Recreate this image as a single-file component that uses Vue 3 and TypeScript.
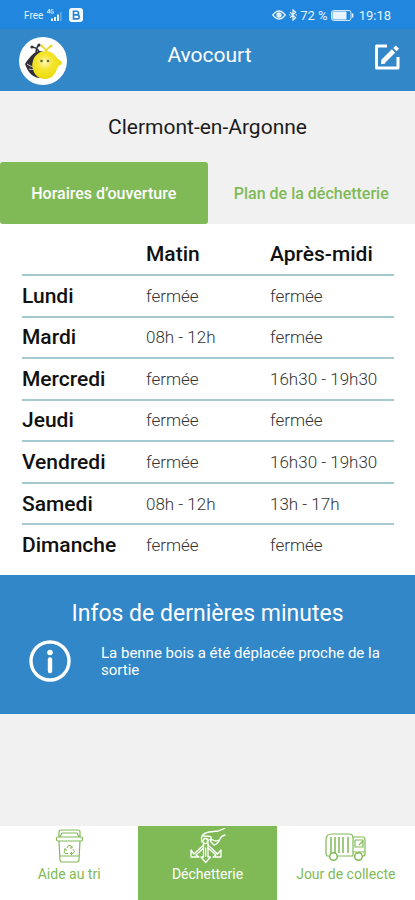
<script setup lang="ts">
import { ref } from 'vue'

interface Day {
  name: string
  morning: string
  afternoon: string
}

const days: Day[] = [
  { name: 'Lundi', morning: 'fermée', afternoon: 'fermée' },
  { name: 'Mardi', morning: '08h - 12h', afternoon: 'fermée' },
  { name: 'Mercredi', morning: 'fermée', afternoon: '16h30 - 19h30' },
  { name: 'Jeudi', morning: 'fermée', afternoon: 'fermée' },
  { name: 'Vendredi', morning: 'fermée', afternoon: '16h30 - 19h30' },
  { name: 'Samedi', morning: '08h - 12h', afternoon: '13h - 17h' },
  { name: 'Dimanche', morning: 'fermée', afternoon: 'fermée' },
]

const tabs: string[] = ['Horaires d’ouverture', 'Plan de la déchetterie']
const activeTab = ref(0)
</script>

<template>
  <div class="app">
    <div class="status">
      <div class="status-side">
        <span class="carrier">Free</span>
        <svg class="signal" width="18" height="13" viewBox="0 0 18 13" fill="currentColor">
          <path d="M2.400 4.400V0L0 3.400h3M6.400.8H4v3.400h2.400V2.600H5.400" fill="none" stroke="currentColor" stroke-width=".8" />
          <path d="M4 9.500h2V12H4zM7 8h2v4H7zM10 5.500h2V12h-2z" />
          <path d="M13 3h1.600v9H13z" opacity=".35" />
        </svg>
        <svg width="14" height="14" viewBox="0 0 14 14">
          <rect width="14" height="14" rx="3" fill="#f2faff" />
          <path d="M4.500 3.200h3.200a1.800 1.800 0 0 1 0 3.700H4.500zM4.500 6.900h3.700a2 2 0 0 1 0 4H4.500z" fill="none" stroke="#2c83cb" stroke-width="1.600" />
        </svg>
      </div>
      <div class="status-side right">
        <svg width="14" height="10" viewBox="0 0 14 10" fill="none" stroke="currentColor" stroke-width="1.300">
          <path d="M.8 5Q7-3 13.200 5 7 13 .8 5z" />
          <circle cx="7" cy="5" r="2" fill="currentColor" />
        </svg>
        <svg width="8" height="12" viewBox="0 0 8 12" fill="none" stroke="currentColor" stroke-width="1.200">
          <path d="M1 3.200 6.600 8.800 4 11.200V.8l2.600 2.400L1 8.800M0 6h1.400M6.600 6H8" />
        </svg>
        <span>72 %</span>
        <svg class="battery" width="23" height="11" viewBox="0 0 23 11">
          <rect x=".6" y=".6" width="19.400" height="9.800" rx="2" fill="none" stroke="currentColor" stroke-width="1" />
          <rect x="1.500" y="1.500" width="14" height="8" rx="1" fill="currentColor" />
          <path d="M21.700 3.500v4" stroke="currentColor" stroke-width="1.400" />
        </svg>
        <span>19:18</span>
      </div>
    </div>

    <header class="header">
      <a class="logo" href="#" aria-label="Accueil">
        <svg width="48" height="50" viewBox="0 0 48 50">
          <defs>
            <radialGradient id="face" cx=".42" cy=".4" r=".6">
              <stop offset="0" stop-color="#fff8b6" />
              <stop offset=".45" stop-color="#f6e52f" />
              <stop offset="1" stop-color="#ecd90b" />
            </radialGradient>
          </defs>
          <circle cx="24" cy="25" r="24" fill="#fff" />
          <path d="M21 15c-5 0-9 4-15 13 3 8 7 13 14 14l4-3-7-11 8-12z" fill="#302f38" />
          <path d="M20 16q-1-4-7-5M17 16q1-6 3-7" fill="none" stroke="#302f38" stroke-width="1.600" />
          <circle cx="13" cy="11" r="1.600" fill="#302f38" />
          <circle cx="20" cy="9" r="1.600" fill="#302f38" />
          <path d="M8 28q3 2 6 3M10 33q3 1 5 0" fill="none" stroke="#f2f2f2" stroke-width=".8" />
          <path d="M27 17q0-4 5-7M28 17q-1-4-5-7" fill="none" stroke="#ead92a" stroke-width="1.700" />
          <circle cx="32" cy="10" r="1.500" fill="#ead92a" />
          <circle cx="23" cy="10" r="1.500" fill="#ead92a" />
          <path d="M27 15c6 0 9 4 11 7 2 2 5 3 5 5s-4 2-5 6c-2 6-6 10-12 10s-11-4-12-10c-1-3-1-5 0-8 1-5 6-10 13-10z" fill="url(#face)" />
          <circle cx="22.500" cy="25" r="1.300" fill="#6b6440" />
          <circle cx="29" cy="25" r="1.300" fill="#6b6440" />
        </svg>
      </a>
      <h1>Avocourt</h1>
      <button class="edit" type="button" aria-label="Modifier">
        <svg width="26" height="26" viewBox="0 0 26 26" fill="none" stroke="currentColor">
          <path d="M13 2H2.500V24H24V13" stroke-width="3" stroke-linejoin="round" />
          <path d="M9 17.500 19.500 7" stroke-width="4.600" />
          <path d="M20.800 5.700 23.400 3.100" stroke-width="4.600" />
          <path d="m7.500 15.500 4 4-4.500.7z" fill="currentColor" stroke="none" />
        </svg>
      </button>
    </header>

    <main>
      <h2 class="town">Clermont-en-Argonne</h2>

      <div class="tabs" role="tablist">
        <button
          v-for="(tab, index) in tabs"
          :key="tab"
          type="button"
          role="tab"
          class="tab"
          :class="{ active: index === activeTab }"
          :aria-selected="index === activeTab"
          @click="activeTab = index"
        >
          {{ tab }}
        </button>
      </div>

      <section class="hours">
        <table>
          <thead>
            <tr>
              <td></td>
              <th scope="col">Matin</th>
              <th scope="col">Après-midi</th>
            </tr>
          </thead>
          <tbody>
            <tr v-for="day in days" :key="day.name">
              <th scope="row">{{ day.name }}</th>
              <td>{{ day.morning }}</td>
              <td>{{ day.afternoon }}</td>
            </tr>
          </tbody>
        </table>
      </section>

      <section class="news">
        <h2>Infos de dernières minutes</h2>
        <div class="news-body">
          <svg width="42" height="42" viewBox="0 0 42 42" fill="none" stroke="currentColor">
            <circle cx="21" cy="21" r="19" stroke-width="3.400" />
            <circle cx="21" cy="12.500" r="2.800" fill="currentColor" stroke="none" />
            <path d="M21 19.500V31" stroke-width="4.400" stroke-linecap="round" />
          </svg>
          <p>La benne bois a été déplacée proche de la sortie</p>
        </div>
      </section>
    </main>

    <nav class="nav">
      <a href="#">
        <svg width="44" height="36" viewBox="0 0 44 36" fill="none" stroke="currentColor" stroke-width="1.200" stroke-linejoin="round">
          <path d="M12 9V4q0-2 2-2h17q2 0 2 2v5M13 9l2-4h15l2 4" />
          <rect x="9.500" y="9" width="26" height="4" rx="1.500" />
          <path d="m12 13 1 19q.2 2 2 2h15q1.800 0 2-2l1-19M13 28h19" />
          <path d="m20 20 1.500-2.500h2L25 20M23 20h2v-2M26 21l1.500 2.500L26 25.500h-2.500M25 24l-1.500 1.500L25 27M21 25.500h-3l-1-1.500 1.500-3M17 21h2v2" stroke-width="1" />
        </svg>
        <span>Aide au tri</span>
      </a>
      <a href="#" class="current" aria-current="page">
        <svg width="44" height="36" viewBox="0 0 44 36" fill="none" stroke="currentColor" stroke-width="1.300" stroke-linejoin="round" stroke-linecap="round">
          <path d="M17 14q-1-4 0-6 2-3 7-4l9-1q4-1 7-3M18 8q6 0 8 1 1 2-2 3l-2 1M40 7q-4 1-5 4-2 5-6 6l-3-3q-1-3 2-2 3 2 6 0" />
          <circle cx="20.500" cy="13" r="2.500" />
          <path d="M18.500 15v14H16l4.700 5.500 4.800-5.500H23V15M20.700 20v8" />
          <path d="M18.500 17 9 26l-3-4v7h8l-3-2 7.500-7M23 17l9.500 9 3.500-4v7h-8l3-2-8-7" />
        </svg>
        <span>Déchetterie</span>
      </a>
      <a href="#">
        <svg width="44" height="36" viewBox="0 0 44 36" fill="none" stroke="currentColor" stroke-width="1.200" stroke-linejoin="round">
          <path d="M5 28H3q-1-1-1-3V12q0-6 6-6h17q4 0 4 4v18H14" />
          <path d="M7 9v16M11 9v16M15 9v16M19 9v16M24 9v16" stroke-width="1.500" />
          <path d="M29 9h10q2 0 2 3v14q0 2-2 2M31 12h8v7h-8zM29 24h12M35 17l4-4" />
          <circle cx="9.500" cy="28.500" r="3.800" stroke-width="1.500" />
          <circle cx="34.500" cy="28.500" r="3.800" stroke-width="1.500" />
        </svg>
        <span>Jour de collecte</span>
      </a>
    </nav>
  </div>
</template>

<style>
body {
  margin: 0;
  background: #f1f1f1;
}
</style>

<style scoped>
.app {
  display: flex;
  flex-direction: column;
  min-height: 100vh;
  font-family: Roboto, "Liberation Sans", sans-serif;
  color: #1c1c1c;
  background: #f1f1f1;
}

h1,
h2,
p {
  margin: 0;
  font-weight: 400;
}

svg {
  display: block;
  flex: none;
}

button {
  border: 0;
  padding: 0;
  background: none;
  font: inherit;
  cursor: pointer;
}

.status {
  display: flex;
  justify-content: space-between;
  align-items: center;
  height: 29px;
  padding: 1px 24px 0;
  box-sizing: border-box;
  background: #2086de;
  color: #e6f4ff;
  font-size: 13px;
}

.status-side {
  display: flex;
  align-items: center;
  gap: 4px;
}

.status-side.right {
  gap: 3px;
}

.carrier {
  font-size: 10px;
}

.battery {
  margin-right: 2px;
}

.header {
  display: grid;
  grid-template-columns: 48px 1fr 48px;
  height: 62px;
  padding: 0 15px 0 19px;
  box-sizing: border-box;
  align-items: center;
  background: #3187c8;
  color: #fff;
}

.logo {
  margin-top: 2px;
}

.header h1 {
  padding-bottom: 10px;
  font-size: 21px;
  line-height: 24px;
  text-align: center;
}

.edit {
  justify-self: end;
  padding-bottom: 6px;
  color: #fff;
}

.town {
  padding: 24px 0 22px;
  font-size: 21px;
  line-height: 25px;
  text-align: center;
}

.tabs {
  display: grid;
  grid-template-columns: 1fr 1fr;
  height: 62px;
}

.tab {
  border-radius: 3px;
  color: #80ba57;
  font-size: 16px;
  font-weight: 500;
}

.tab.active {
  background: #80ba57;
  color: #fff;
}

.hours {
  padding: 10px 21px 8px 22px;
  background: #fff;
}

table {
  width: 100%;
  height: 333px;
  table-layout: fixed;
  border-collapse: separate;
  border-spacing: 0;
}

thead tr {
  height: 42px;
}

th,
td {
  padding: 0;
  border-bottom: 2px solid #a5c8d1;
  text-align: left;
  vertical-align: middle;
}

th {
  color: #111;
  font-size: 21px;
  line-height: 24px;
  font-weight: 500;
}

td {
  color: #333;
  font-size: 17px;
  font-weight: 300;
}

tbody tr:last-child > * {
  border-bottom-color: transparent;
}

.news {
  padding: 24px 29px 32px;
  background: #3187c8;
  color: #fff;
}

.news h2 {
  font-size: 23px;
  line-height: 29px;
  text-align: center;
}

.news-body {
  display: flex;
  gap: 30px;
  padding-top: 12px;
}

.news p {
  padding-top: 5px;
  font-size: 15px;
  line-height: 17px;
}

.nav {
  display: grid;
  grid-template-columns: repeat(3, 1fr);
  height: 74px;
  margin-top: auto;
  background: #fff;
}

.nav a {
  display: flex;
  flex-direction: column;
  align-items: center;
  gap: 1px;
  padding-top: 2px;
  color: #80ba57;
  font-size: 14px;
  line-height: 18px;
  text-decoration: none;
}

.nav .current {
  background: #80ba57;
  color: #fff;
}
</style>
